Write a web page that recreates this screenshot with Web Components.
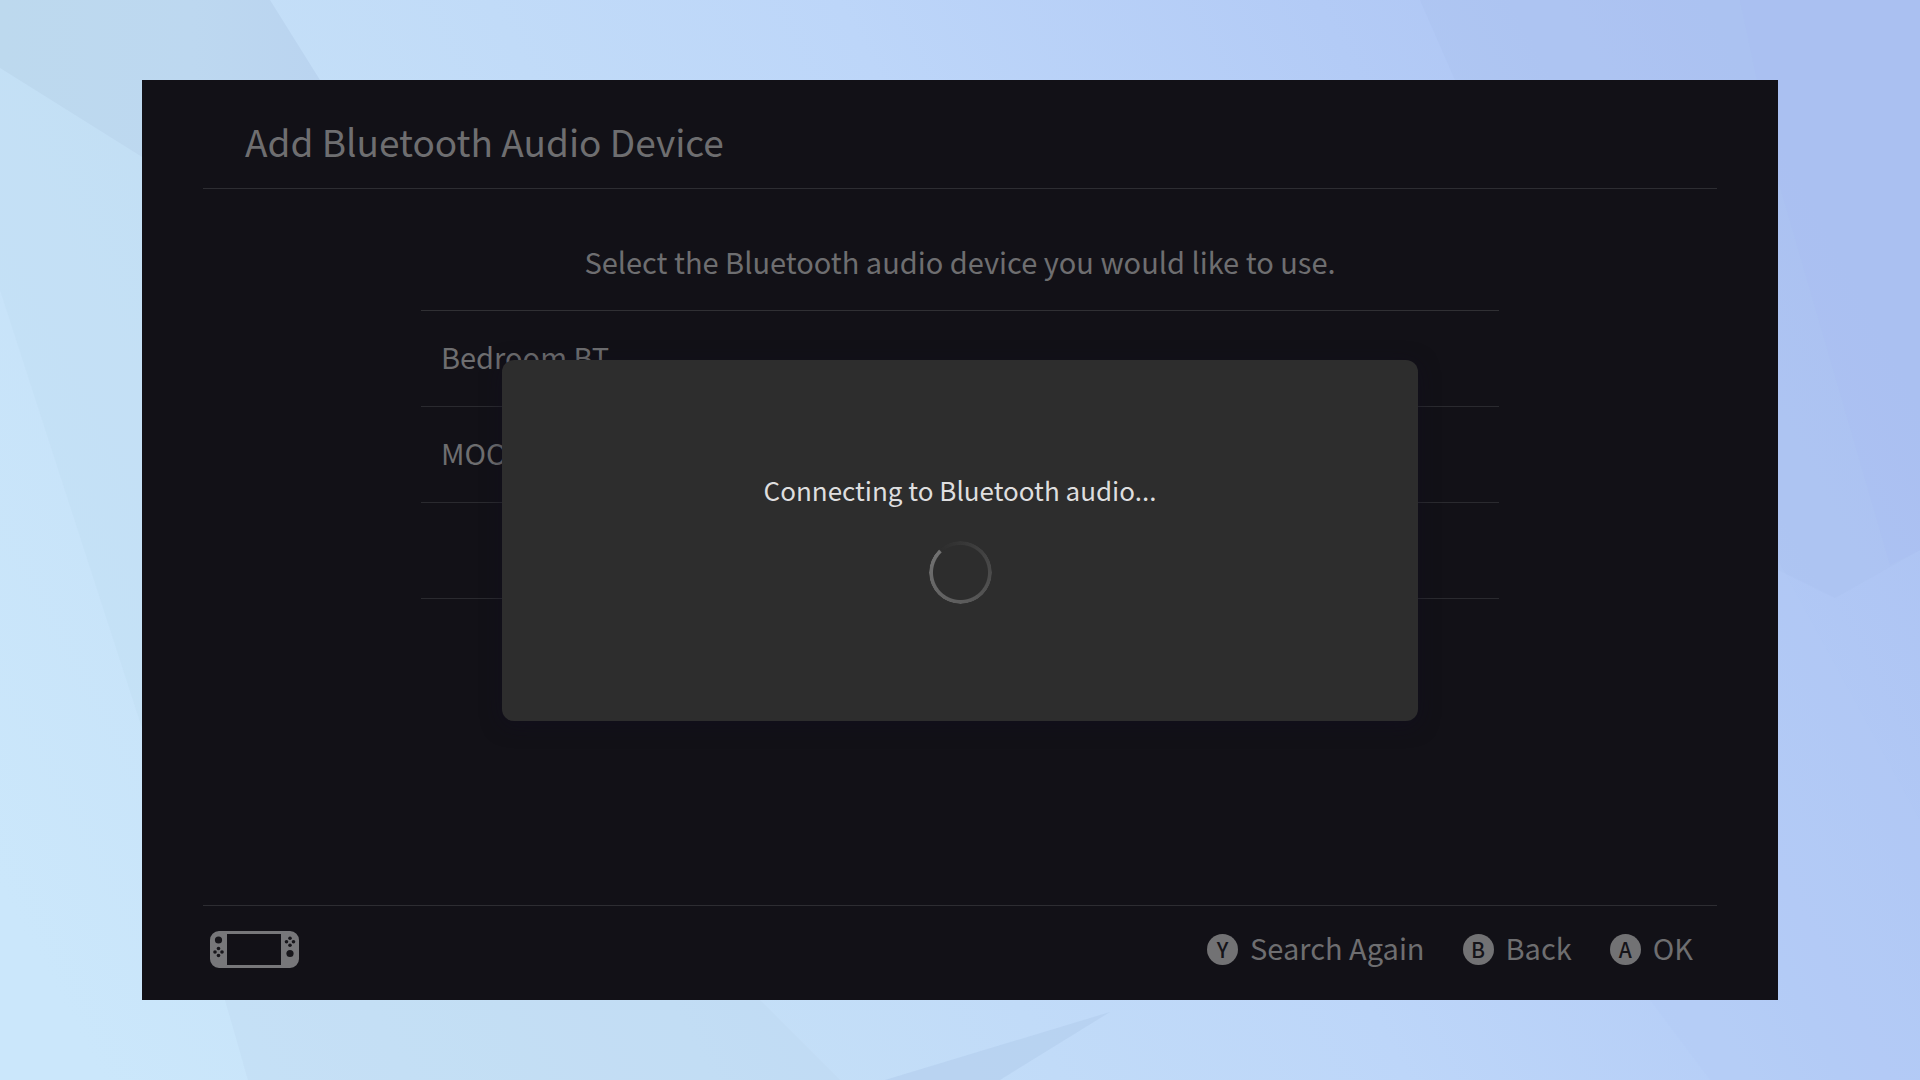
<!DOCTYPE html>
<html lang="en">
<head>
<meta charset="utf-8">
<title>Add Bluetooth Audio Device</title>
<style>
  html, body { margin: 0; min-height: 100%; }
  body {
    font-family: "Noto Sans CJK JP", "Noto Sans", sans-serif;
    color: #6e6e70;
    background: #c0daf7;
  }
</style>
</head>
<body>
<facet-backdrop>
  <console-screen>
    <screen-header slot="header">Add Bluetooth Audio Device</screen-header>
    <device-list>
      <span slot="prompt">Select the Bluetooth audio device you would like to use.</span>
      <device-row>Bedroom BT</device-row>
      <device-row>MOO</device-row>
      <device-row empty></device-row>
    </device-list>
    <screen-footer slot="footer">
      <key-hint key="Y">Search Again</key-hint>
      <key-hint key="B">Back</key-hint>
      <key-hint key="A">OK</key-hint>
    </screen-footer>
    <progress-dialog slot="dialog">Connecting to Bluetooth audio...</progress-dialog>
  </console-screen>
</facet-backdrop>

<script>
const define = (name, html, setup) => {
  const template = document.createElement('template');
  template.innerHTML = html;
  customElements.define(name, class extends HTMLElement {
    constructor() {
      super();
      this.attachShadow({ mode: 'open' }).append(template.content.cloneNode(true));
    }
    connectedCallback() { if (setup) setup(this, this.shadowRoot); }
  });
};

define('facet-backdrop', `
  <style>
    :host { display: flex; position: relative; box-sizing: border-box; min-height: 100vh; padding: 80px 142px; }
    svg { position: absolute; inset: 0; width: 100%; height: 100%; }
    ::slotted(*) { flex: 1; position: relative; }
  </style>
  <svg viewBox="0 0 1920 1080" preserveAspectRatio="none" aria-hidden="true">
    <defs>
      <linearGradient id="sky" gradientUnits="userSpaceOnUse" x1="60" y1="1000" x2="1760" y2="100">
        <stop offset="0" stop-color="#cbe7fb"/>
        <stop offset=".28" stop-color="#c5e0f7"/>
        <stop offset=".6" stop-color="#bdd6f9"/>
        <stop offset=".82" stop-color="#b3cbf6"/>
        <stop offset="1" stop-color="#adc3f3"/>
      </linearGradient>
      <linearGradient id="corner" x1="0" y1="0" x2="1" y2="0">
        <stop offset="0" stop-color="#bdd9ee"/>
        <stop offset=".6" stop-color="#bdd8f0"/>
        <stop offset="1" stop-color="#bad4f0"/>
      </linearGradient>
    </defs>
    <rect width="1920" height="1080" fill="url(#sky)"/>
    <path d="M0 68L142 157L320 300V900L142 728L0 290Z" fill="#bdd9f0" opacity=".3"/>
    <path d="M0 0H270L320 80V220H240L142 157L0 68Z" fill="url(#corner)"/>
    <path d="M225 1000L248 1080H840L760 1000Z" fill="#bcd8ee" opacity=".35"/>
    <path d="M1110 1012L885 1080H1000Z" fill="#b2cdec" opacity=".6"/>
    <path d="M1420 0L1455 80L1778 570L1835 598L1920 550V0Z" fill="#a9c1ee" opacity=".35"/>
    <path d="M1740 0L1778 180L1890 565L1920 550V0Z" fill="#a9bef3" opacity=".3"/>
    <path d="M1650 1000L1710 1080H1920V820L1778 560V1000Z" fill="#b2c9f4" opacity=".3"/>
  </svg>
  <slot></slot>`);

define('console-screen', `
  <style>
    :host { display: flex; flex-direction: column; background: #121117; }
    ::slotted([slot="header"]), ::slotted([slot="footer"]) { margin: 0 61px; }
    main { flex: 1; padding: 0 279px; }
    .overlay { position: absolute; inset: 0; display: grid; place-items: center; }
    ::slotted([slot="dialog"]) { width: 56%; }
  </style>
  <slot name="header"></slot>
  <main><slot></slot></main>
  <slot name="footer"></slot>
  <div class="overlay"><slot name="dialog"></slot></div>`);

define('screen-header', `
  <style>
    :host { display: block; padding: 30px 42px 16px; border-bottom: 1px solid #2d2d32; }
    h1 { margin: 0; font-size: 37px; line-height: 62px; font-weight: 400; }
  </style>
  <h1><slot></slot></h1>`);

define('device-list', `
  <style>
    :host { display: block; }
    p { margin: 0; padding: 48px 0 25px; font-size: 29px; line-height: 48px; text-align: center; }
    div { border-top: 1px solid #303034; }
  </style>
  <p><slot name="prompt"></slot></p>
  <div role="list"><slot></slot></div>`);

define('device-row', `
  <style>
    :host { display: block; border-bottom: 1px solid #2a2a2f; }
    button {
      display: block; box-sizing: border-box; width: 100%; height: 95px; margin: 0; padding: 0 20px 6px;
      border: 0; background: none; color: inherit; font: inherit; font-size: 29px; line-height: 48px; text-align: left;
    }
  </style>
  <button type="button"><slot></slot></button>`,
  (host, root) => {
    host.setAttribute('role', 'listitem');
    root.querySelector('button').disabled = host.hasAttribute('empty');
  });

define('screen-footer', `
  <style>
    :host { display: flex; align-items: center; justify-content: space-between; padding: 20px 24px 28px 7px; border-top: 1px solid #2d2d32; }
    svg { display: block; width: 89px; height: 38px; }
    nav { display: flex; gap: 38px; }
  </style>
  <svg viewBox="0 0 89 38" role="img" aria-label="Handheld console">
    <path fill="#77777a" fill-rule="evenodd" d="M9 1H80A9 9 0 0 1 89 10V29A9 9 0 0 1 80 38H9A9 9 0 0 1 0 29V10A9 9 0 0 1 9 1ZM17 4V35H71V4Z"/>
    <g fill="#17161b" transform="translate(0 1)">
      <circle cx="8.500" cy="9" r="3.600"/>
      <circle cx="8.500" cy="17.500" r="1.800"/><circle cx="8.500" cy="24.500" r="1.800"/>
      <circle cx="5" cy="21" r="1.800"/><circle cx="12" cy="21" r="1.800"/>
      <circle cx="80" cy="7.300" r="1.800"/><circle cx="80" cy="14.300" r="1.800"/>
      <circle cx="76.500" cy="10.800" r="1.800"/><circle cx="83.500" cy="10.800" r="1.800"/>
      <circle cx="80" cy="22.500" r="3.600"/>
    </g>
  </svg>
  <nav aria-label="Actions"><slot></slot></nav>`);

define('key-hint', `
  <style>
    :host { display: block; }
    button {
      display: flex; align-items: center; gap: 12px; margin: 0; padding: 0; border: 0;
      background: none; color: inherit; font: inherit; font-size: 29px; line-height: 42px;
    }
    .key {
      display: grid; place-items: center; width: 31px; height: 31px; border-radius: 50%;
      background: #727274; color: #151419; font-size: 21px; line-height: 31px; font-weight: 500;
    }
    .label { padding-bottom: 4px; }
  </style>
  <button type="button"><span class="key"></span><span class="label"><slot></slot></span></button>`,
  (host, root) => { root.querySelector('.key').textContent = host.getAttribute('key'); });

define('progress-dialog', `
  <style>
    :host { display: block; }
    section {
      display: flex; flex-direction: column; align-items: center; gap: 31px; padding: 110px 32px 117px;
      border-radius: 12px; background: #2d2d2d; color: #dededf; box-shadow: 0 4px 20px rgba(17, 13, 34, .5);
    }
    p { margin: 0; font-size: 26px; line-height: 40px; }
    .spinner {
      width: 63px; height: 63px; border-radius: 50%;
      background: conic-gradient(from -42deg, #2d2d2d 0deg, #333 30deg, #444 100deg, #5c5c5c 220deg, #727272 358deg, #2d2d2d 360deg);
      mask: radial-gradient(circle closest-side, transparent 27px, #000 28px, #000 31px, transparent 32px);
    }
  </style>
  <section role="dialog" aria-labelledby="message">
    <p id="message"><slot></slot></p>
    <div class="spinner" role="progressbar" aria-label="Connecting"></div>
  </section>`);
</script>
</body>
</html>
